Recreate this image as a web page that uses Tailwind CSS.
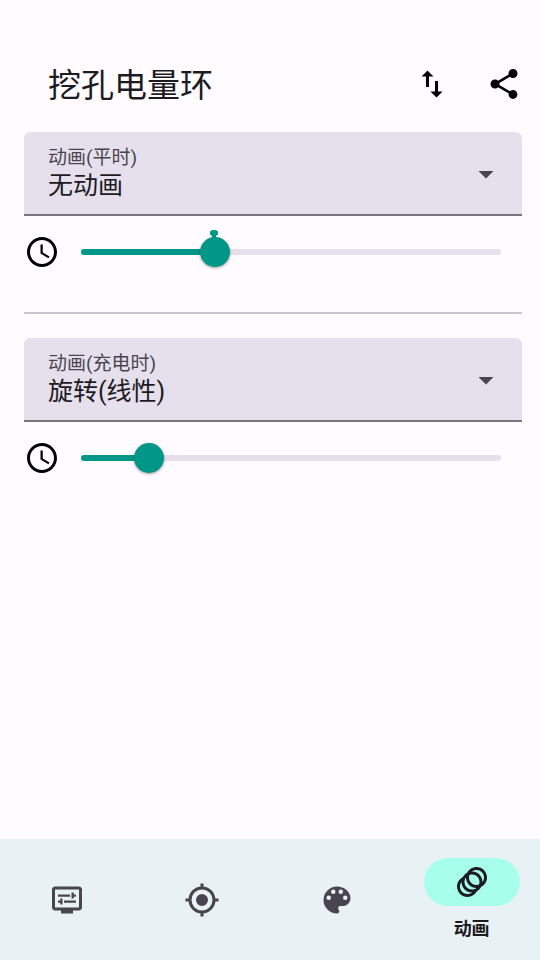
<!DOCTYPE html>
<html lang="zh-CN">
<head>
<meta charset="utf-8">
<meta name="viewport" content="width=device-width, initial-scale=1">
<title>挖孔电量环</title>
<script src="https://cdn.jsdelivr.net/npm/@tailwindcss/browser@4"></script>
</head>
<body class="flex min-h-screen flex-col bg-[#fffbff] font-[Roboto,'Noto_Sans_CJK_SC',sans-serif] text-[#1c1b1f]">
  <header class="flex items-start gap-9 pt-[60px] pr-[18px] pb-[22px] pl-12 text-black">
    <h1 class="flex-1 pt-0.5 text-[33px] leading-[48px] text-[#1c1b1f]">挖孔电量环</h1>
    <button type="button" aria-label="排序" class="mt-1.5 size-9">
      <svg viewBox="0 0 24 24" class="size-9 fill-current"><path d="M16 17.01V10h-2v7.01h-3L15 21l4-3.99h-3zM9 3L5 6.99h3V14h2V6.99h3L9 3z"/></svg>
    </button>
    <button type="button" aria-label="分享" class="mt-1.5 size-9">
      <svg viewBox="0 0 24 24" class="size-9 fill-current"><path d="M18 16.08c-.76 0-1.44.3-1.96.77L8.91 12.7c.05-.23.09-.46.09-.7s-.04-.47-.09-.7l7.05-4.11c.54.5 1.25.81 2.04.81 1.66 0 3-1.34 3-3s-1.34-3-3-3-3 1.34-3 3c0 .24.04.47.09.7L8.04 9.81C7.5 9.31 6.79 9 6 9c-1.66 0-3 1.34-3 3s1.34 3 3 3c.79 0 1.5-.31 2.04-.81l7.12 4.16c-.05.21-.08.43-.08.65 0 1.61 1.31 2.92 2.92 2.92s2.92-1.31 2.92-2.92-1.31-2.92-2.92-2.92z"/></svg>
    </button>
  </header>

  <main class="flex-1 pr-[18px] pl-6">
    <section>
      <div class="relative">
        <label for="normal" class="pointer-events-none absolute top-[13px] left-6 text-[19px] leading-[26px] text-[#49454f]">动画(平时)</label>
        <select id="normal" class="block h-[84px] w-full appearance-none rounded-t-md border-b-2 border-[#79747e] bg-[#e6e0ec] pt-[26px] pr-16 pl-6 text-[25px] outline-none">
          <option>无动画</option>
        </select>
        <svg viewBox="0 0 24 24" class="pointer-events-none absolute top-6 right-[18px] size-9 fill-[#49454f]"><path d="M7 10l5 5 5-5z"/></svg>
      </div>
      <div class="flex items-center gap-[9px] pt-[18px] pr-[9px]">
        <svg viewBox="0 0 24 24" class="size-9 fill-black"><path d="M12 2C6.5 2 2 6.5 2 12s4.500 10 10 10 10-4.500 10-10S17.500 2 12 2zm0 18c-4.410 0-8-3.590-8-8s3.590-8 8-8 8 3.590 8 8-3.590 8-8 8zm.5-13H11v6l5.250 3.150.75-1.230-4.500-2.670z"/></svg>
        <div class="relative flex-1">
          <div class="absolute inset-x-3 top-3 h-1.5 overflow-hidden rounded-full bg-[#e6e0ec]">
            <div class="h-full bg-[#009688]" style="width:31.58%"></div>
          </div>
          <svg viewBox="0 0 10 9" class="absolute -top-[7px] left-[140px] h-[9px] w-[10px] fill-[#009688]"><path d="M3 0h4l2 1.500v3L7 6v3H3V6L1 4.500v-3z"/></svg>
          <input type="range" aria-label="平时动画时长" min="1" max="20" value="7" class="relative block h-[30px] w-full appearance-none bg-transparent [&::-webkit-slider-thumb]:size-[30px] [&::-webkit-slider-thumb]:appearance-none [&::-webkit-slider-thumb]:rounded-full [&::-webkit-slider-thumb]:bg-[#009688] [&::-webkit-slider-thumb]:shadow-[0_1px_3px_rgba(0,0,0,0.4)]">
        </div>
      </div>
    </section>

    <hr class="mt-[42px] mb-6 border-t-2 border-[#cac4d0]">

    <section>
      <div class="relative">
        <label for="charging" class="pointer-events-none absolute top-[13px] left-6 text-[19px] leading-[26px] text-[#49454f]">动画(充电时)</label>
        <select id="charging" class="block h-[84px] w-full appearance-none rounded-t-md border-b-2 border-[#79747e] bg-[#e6e0ec] pt-[26px] pr-16 pl-6 text-[25px] outline-none">
          <option>旋转(线性)</option>
        </select>
        <svg viewBox="0 0 24 24" class="pointer-events-none absolute top-6 right-[18px] size-9 fill-[#49454f]"><path d="M7 10l5 5 5-5z"/></svg>
      </div>
      <div class="flex items-center gap-[9px] pt-[18px] pr-[9px]">
        <svg viewBox="0 0 24 24" class="size-9 fill-black"><path d="M12 2C6.5 2 2 6.5 2 12s4.500 10 10 10 10-4.500 10-10S17.500 2 12 2zm0 18c-4.410 0-8-3.590-8-8s3.590-8 8-8 8 3.590 8 8-3.590 8-8 8zm.5-13H11v6l5.250 3.150.75-1.230-4.500-2.670z"/></svg>
        <div class="relative flex-1">
          <div class="absolute inset-x-3 top-3 h-1.5 overflow-hidden rounded-full bg-[#e6e0ec]">
            <div class="h-full bg-[#009688]" style="width:15.79%"></div>
          </div>
          <input type="range" aria-label="充电时动画时长" min="1" max="20" value="4" class="relative block h-[30px] w-full appearance-none bg-transparent [&::-webkit-slider-thumb]:size-[30px] [&::-webkit-slider-thumb]:appearance-none [&::-webkit-slider-thumb]:rounded-full [&::-webkit-slider-thumb]:bg-[#009688] [&::-webkit-slider-thumb]:shadow-[0_1px_3px_rgba(0,0,0,0.4)]">
        </div>
      </div>
    </section>
  </main>

  <nav class="grid h-[121px] grid-cols-4 bg-[#e8f1f3] pr-px text-[#49454f]">
    <a href="#display" aria-label="显示" class="flex items-center justify-center">
      <svg viewBox="0 0 24 24" class="size-9 fill-current"><path d="M20 3H4c-1.100 0-2 .9-2 2v12c0 1.100.9 2 2 2h4v2h8v-2h4c1.100 0 2-.9 2-2V5c0-1.100-.9-2-2-2zm0 14H4V5h16v12zM6 8.250h8v1.500H6zM16.500 9.750H18v-1.500h-1.500V7H15v4h1.500zM10 12.250h8v1.500h-8zM7.500 15H9v-4H7.500v1.250H6v1.500h1.500z"/></svg>
    </a>
    <a href="#position" aria-label="位置" class="flex items-center justify-center">
      <svg viewBox="0 0 24 24" class="size-9 fill-current"><path fill-rule="evenodd" d="M12 8a4 4 0 1 1 0 8 4 4 0 0 1 0-8M3.050 13H1v-2h2.050C3.500 6.830 6.830 3.500 11 3.050V1h2v2.050c4.170.45 7.500 3.780 7.950 7.950H23v2h-2.050c-.45 4.170-3.780 7.500-7.950 7.950V23h-2v-2.050C6.830 20.500 3.500 17.170 3.050 13M12 5a7 7 0 1 0 0 14 7 7 0 0 0 0-14z"/></svg>
    </a>
    <a href="#color" aria-label="颜色" class="flex items-center justify-center">
      <svg viewBox="0 0 24 24" class="size-9 fill-current"><path d="M17.500 12a1.500 1.500 0 1 1 0-3 1.500 1.500 0 0 1 0 3m-3-4a1.500 1.500 0 1 1 0-3 1.500 1.500 0 0 1 0 3m-5 0a1.500 1.500 0 1 1 0-3 1.500 1.500 0 0 1 0 3m-3 4a1.500 1.500 0 1 1 0-3 1.500 1.500 0 0 1 0 3M12 3a9 9 0 0 0 0 18 1.500 1.500 0 0 0 1.500-1.500c0-.39-.15-.74-.39-1-.23-.27-.38-.62-.38-1a1.500 1.500 0 0 1 1.500-1.500H16a5 5 0 0 0 5-5c0-4.420-4.030-8-9-8z"/></svg>
    </a>
    <a href="#animation" aria-current="page" class="flex flex-col items-center gap-[11px] pt-[19px] text-[#1c1b1f]">
      <span class="flex h-12 w-24 items-center justify-center rounded-full bg-[#a7ffeb]">
        <svg viewBox="0 0 24 24" class="size-9 fill-current"><path d="M15 2c-2.710 0-5.050 1.540-6.220 3.780-1.280.67-2.340 1.720-3 3C3.540 9.950 2 12.290 2 15c0 3.870 3.130 7 7 7 2.710 0 5.050-1.540 6.220-3.780 1.280-.67 2.340-1.720 3-3C20.460 14.050 22 11.710 22 9c0-3.870-3.130-7-7-7zM9 20c-2.760 0-5-2.240-5-5 0-1.120.37-2.160 1-3 0 3.870 3.130 7 7 7-.84.63-1.880 1-3 1zm3-3c-2.760 0-5-2.240-5-5 0-1.120.37-2.160 1-3 0 3.860 3.130 6.990 7 7-.84.63-1.880 1-3 1zm4.700-3.300c-.53.19-1.100.3-1.700.3-2.760 0-5-2.240-5-5 0-.6.11-1.170.3-1.700.53-.19 1.100-.3 1.700-.3 2.760 0 5 2.240 5 5 0 .6-.11 1.170-.3 1.700zM19 12c0-3.860-3.130-6.990-7-7 .84-.63 1.870-1 3-1 2.760 0 5 2.240 5 5 0 1.120-.37 2.160-1 3z"/></svg>
      </span>
      <span class="text-lg leading-6 font-bold">动画</span>
    </a>
  </nav>
</body>
</html>
